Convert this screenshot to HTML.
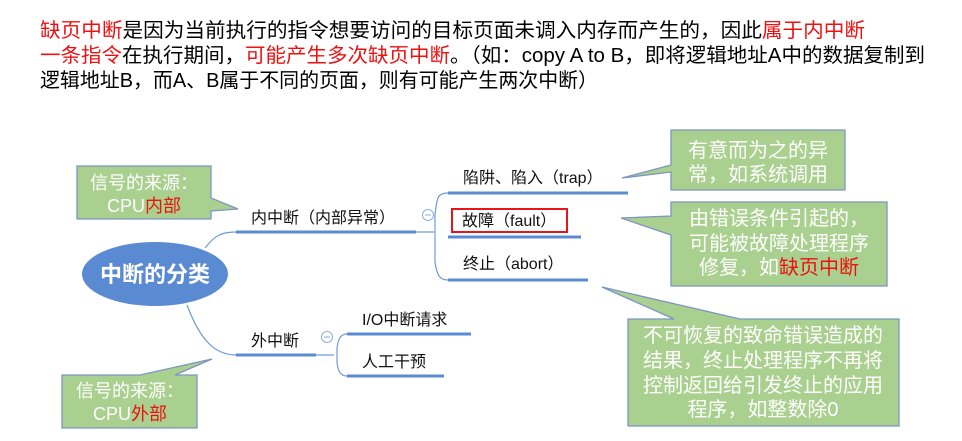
<!DOCTYPE html>
<html><head><meta charset="utf-8"><style>
html,body{margin:0;padding:0;background:#fff;width:962px;height:441px;overflow:hidden}
svg{display:block;font-family:"Liberation Sans","Noto Sans CJK SC",sans-serif}
</style></head><body>
<svg width="962" height="441" viewBox="0 0 962 441">
<g font-size="20" fill="#000">
<text x="40" y="37" textLength="825" lengthAdjust="spacingAndGlyphs"><tspan fill="#ee1111">缺页中断</tspan>是因为当前执行的指令想要访问的目标页面未调入内存而产生的，因此<tspan fill="#ee1111">属于内中断</tspan></text>
<text x="40" y="62" textLength="885" lengthAdjust="spacingAndGlyphs"><tspan fill="#ee1111">一条指令</tspan>在执行期间，<tspan fill="#ee1111">可能产生多次缺页中断</tspan>。（如：copy A to B，即将逻辑地址A中的数据复制到</text>
<text x="40" y="87" textLength="558" lengthAdjust="spacingAndGlyphs">逻辑地址B，而A、B属于不同的页面，则有可能产生两次中断）</text>
</g>
<!-- connectors -->
<g fill="none" stroke="#6f9ad8" stroke-width="1.2">
<path d="M205 248 C215 235 222 232 236 232"/>
<path d="M187 305 C200 340 215 355 236 355"/>
<path d="M416 232 L434 232"/>
<path d="M448 193 C436 193 437 200 435 215 L435 262 C437 276 440 280 448 280"/>
<path d="M316 355 L334 355"/>
<path d="M347 334 C340 334 338 340 337 348 L337 362 C338 372 341 376 347 376"/>
</g>
<g stroke="#5b8bd0" stroke-width="3">
<line x1="236" y1="232" x2="416" y2="232"/>
<line x1="236" y1="355" x2="316" y2="355"/>
<line x1="448" y1="193" x2="628" y2="193"/>
<line x1="448" y1="237" x2="581" y2="237"/>
<line x1="448" y1="280" x2="588" y2="280"/>
<line x1="347" y1="334" x2="471" y2="334"/>
<line x1="347" y1="376" x2="444" y2="376"/>
</g>
<g fill="#fff" stroke="#8aaee0" stroke-width="1">
<circle cx="428" cy="215" r="5.5"/><circle cx="327" cy="337" r="5.5"/>
</g>
<g stroke="#8aaee0" stroke-width="1"><line x1="425" y1="215" x2="431" y2="215"/><line x1="324" y1="337" x2="330" y2="337"/></g>
<ellipse cx="155" cy="274" rx="73" ry="32" fill="#5a8ad2"/>
<text x="155" y="282" font-size="22" font-weight="bold" fill="#fff" text-anchor="middle">中断的分类</text>
<g font-size="16" fill="#111">
<text x="251" y="223">内中断（内部异常）</text>
<text x="251" y="346">外中断</text>
<text x="463" y="183">陷阱、陷入（trap）</text>
<text x="462" y="226">故障（fault）</text>
<text x="463" y="269">终止（abort）</text>
<text x="362" y="325">I/O中断请求</text>
<text x="362" y="367">人工干预</text>
</g>
<rect x="452" y="209" width="115" height="23" fill="none" stroke="#e8151b" stroke-width="2"/>
<!-- callouts -->
<g fill="#a9d08e" stroke="#7b96c4" stroke-width="1.3">
<path d="M77 166 H211 V198 L238 209 L211 211 V219 H77 Z"/>
<path d="M62 375 H140 L212 359 L175 375 H197 V428 H62 Z"/>
<path d="M671 130 H845 V190 H671 V172 L622 178 L671 165 Z"/>
<path d="M671 202 H887 V286 H671 V235 L621 218 L671 216 Z"/>
<path d="M628 319 H674 L602 287 L740 319 H899 V426 H628 Z"/>
</g>
<g fill="#fff" font-size="18" text-anchor="middle">
<text x="144" y="189">信号的来源：</text>
<text x="144" y="212">CPU<tspan fill="#ee1111">内部</tspan></text>
<text x="130" y="397">信号的来源：</text>
<text x="130" y="420">CPU<tspan fill="#ee1111">外部</tspan></text>
</g>
<g fill="#fff" font-size="20" text-anchor="middle">
<text x="758" y="157">有意而为之的异</text>
<text x="758" y="181">常，如系统调用</text>
<text x="779" y="225">由错误条件引起的，</text>
<text x="779" y="250">可能被故障处理程序</text>
<text x="779" y="274">修复，如<tspan fill="#ee1111">缺页中断</tspan></text>
<text x="763" y="342">不可恢复的致命错误造成的</text>
<text x="763" y="367">结果，终止处理程序不再将</text>
<text x="763" y="392">控制返回给引发终止的应用</text>
<text x="763" y="416">程序，如整数除0</text>
</g>
</svg>
</body></html>
